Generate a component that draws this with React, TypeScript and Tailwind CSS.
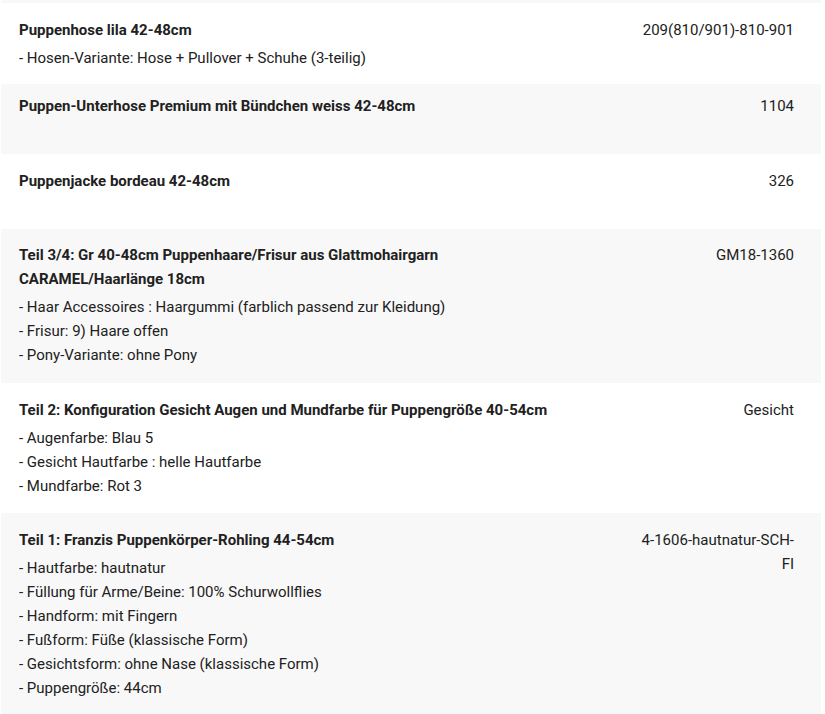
type Item = {
  title: string;
  options: string[];
  sku: string;
  pad: string;
};

const items: Item[] = [
  {
    title: "Puppenhose lila 42-48cm",
    options: ["- Hosen-Variante: Hose + Pullover + Schuhe (3-teilig)"],
    sku: "209(810/901)-810-901",
    pad: "pt-[15px] pb-[14px]",
  },
  {
    title: "Puppen-Unterhose Premium mit Bündchen weiss 42-48cm",
    options: [],
    sku: "1104",
    pad: "pt-[10px] pb-[36px]",
  },
  {
    title: "Puppenjacke bordeau 42-48cm",
    options: [],
    sku: "326",
    pad: "pt-[15px] pb-[36px]",
  },
  {
    title: "Teil 3/4: Gr 40-48cm Puppenhaare/Frisur aus Glattmohairgarn CARAMEL/Haarlänge 18cm",
    options: [
      "- Haar Accessoires : Haargummi (farblich passend zur Kleidung)",
      "- Frisur: 9) Haare offen",
      "- Pony-Variante: ohne Pony",
    ],
    sku: "GM18-1360",
    pad: "pt-[14px] pb-[16px]",
  },
  {
    title: "Teil 2: Konfiguration Gesicht Augen und Mundfarbe für Puppengröße 40-54cm",
    options: ["- Augenfarbe: Blau 5", "- Gesicht Hautfarbe : helle Hautfarbe", "- Mundfarbe: Rot 3"],
    sku: "Gesicht",
    pad: "pt-[15px] pb-[15px]",
  },
  {
    title: "Teil 1: Franzis Puppenkörper-Rohling 44-54cm",
    options: [
      "- Hautfarbe: hautnatur",
      "- Füllung für Arme/Beine: 100% Schurwollflies",
      "- Handform: mit Fingern",
      "- Fußform: Füße (klassische Form)",
      "- Gesichtsform: ohne Nase (klassische Form)",
      "- Puppengröße: 44cm",
    ],
    sku: "4-1606-hautnatur-SCH-FI",
    pad: "pt-[15px] pb-[15px]",
  },
];

export default function App() {
  return (
    <div className="min-h-[714px] bg-white font-['Roboto',sans-serif] text-[15px] leading-6 text-[#212121]">
      <div className="ml-px w-[820px]">
        {/* tail of the previous row */}
        <div className="h-[3px] bg-[#f8f8f8]" />
        {items.map((item, index) => (
          <div
            key={index}
            className={`flex gap-[60px] pl-[18px] pr-[27px] ${item.pad} ${
              index % 2 === 0 ? "bg-white" : "bg-[#f8f8f8]"
            }`}
          >
            <div className="min-w-0 flex-1">
              <p className="font-bold">{item.title}</p>
              {item.options.length > 0 && (
                <div className="mt-[4px]">
                  {item.options.map((opt) => (
                    <p key={opt}>{opt}</p>
                  ))}
                </div>
              )}
            </div>
            <div className="w-[156px] shrink-0 break-words text-right">{item.sku}</div>
          </div>
        ))}
      </div>
    </div>
  );
}
